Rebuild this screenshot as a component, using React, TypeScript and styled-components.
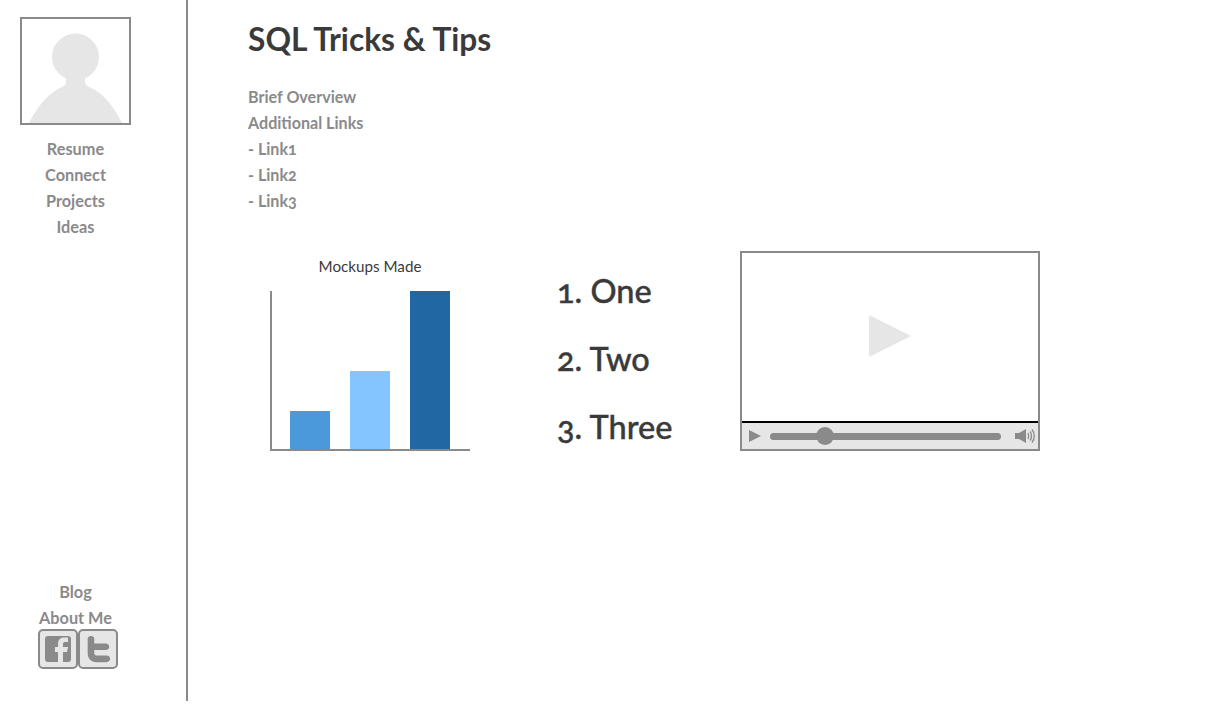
import React from "react";
import styled, { createGlobalStyle } from "styled-components";

const Global = createGlobalStyle`
  html, body { margin: 0; padding: 0; background: #fff; }
  body { font-family: Lato, "Open Sans", "Liberation Sans", sans-serif; }
`;

const Page = styled.div`
  display: flex;
  width: 1210px;
  height: 721px;
  overflow: hidden;
`;

const Sidebar = styled.aside`
  box-sizing: border-box;
  width: 188px;
  height: 701px;
  border-right: 2px solid #8a8a8a;
  padding: 17px 55px 0 20px;
  display: flex;
  flex-direction: column;
  align-items: center;
  flex: none;
`;

const Avatar = styled.div`
  box-sizing: border-box;
  flex: none;
  width: 111px;
  height: 108px;
  border: 2px solid #8a8a8a;
  margin-bottom: 11px;
  svg { display: block; }
`;

const NavLink = styled.div`
  height: 26px;
  line-height: 26px;
  font-size: 16.3px;
  font-weight: 700;
  color: #8a8a8a;
  text-align: center;
  white-space: nowrap;
`;

const Spacer = styled.div`
  flex: 1;
`;

const Socials = styled.div`
  display: flex;
  height: 40px;
  margin-top: -2px;
  margin-bottom: 32px;
  margin-left: 4px;
`;

const SocialButton = styled.div`
  box-sizing: border-box;
  width: 40px;
  height: 40px;
  border: 2px solid #8a8a8a;
  border-radius: 5px;
  background: #e6e6e6;
  display: flex;
  align-items: center;
  justify-content: center;
`;

const Main = styled.main`
  padding: 17px 0 0 60px;
  flex: 1;
`;

const Title = styled.h1`
  margin: 0 0 23px;
  height: 44px;
  line-height: 44px;
  font-size: 31.7px;
  font-weight: 700;
  color: #3a3a3a;
  white-space: nowrap;
`;

const InfoLine = styled.div`
  height: 26px;
  line-height: 26px;
  font-size: 16.1px;
  font-weight: 700;
  color: #8a8a8a;
  font-feature-settings: "onum";
`;

const Row = styled.div`
  display: flex;
  align-items: flex-start;
  margin-top: 37px;
`;

const Chart = styled.div`
  width: 244px;
  padding-left: 22px;
  flex: none;
`;

const ChartTitle = styled.div`
  width: 200px;
  height: 30px;
  line-height: 30px;
  margin-bottom: 10px;
  font-size: 15.2px;
  color: #3a3a3a;
  text-align: center;
`;

const Plot = styled.div`
  box-sizing: border-box;
  width: 200px;
  height: 160px;
  border-left: 2px solid #8a8a8a;
  border-bottom: 2px solid #8a8a8a;
  padding-left: 18px;
  display: flex;
  align-items: flex-end;
  gap: 20px;
`;

const Bar = styled.div<{ $h: number; $c: string }>`
  width: 40px;
  height: ${(p) => p.$h}px;
  background: ${(p) => p.$c};
`;

const Numbers = styled.div`
  width: 183px;
  margin-left: 43px;
  padding-top: 17px;
  flex: none;
`;

const NumberItem = styled.div`
  height: 68px;
  line-height: 46px;
  font-size: 32.5px;
  font-weight: 500;
  color: #3a3a3a;
  font-feature-settings: "onum";
  -webkit-text-stroke: 0.4px #3a3a3a;
  white-space: nowrap;
`;

const Video = styled.div`
  box-sizing: border-box;
  width: 300px;
  height: 200px;
  border: 2px solid #8a8a8a;
  display: flex;
  flex-direction: column;
  flex: none;
`;

const Screen = styled.div`
  flex: 1;
  display: flex;
  align-items: center;
  justify-content: center;
  padding-bottom: 2px;
`;

const Controls = styled.div`
  box-sizing: border-box;
  height: 28px;
  background: #e6e6e6;
  border-top: 2px solid #000;
  display: flex;
  align-items: center;
  padding: 0 2px 0 7px;
`;

const Track = styled.div`
  position: relative;
  width: 231px;
  height: 7px;
  margin-left: 9px;
  border-radius: 4px;
  background: #8a8a8a;
`;

const Knob = styled.div`
  position: absolute;
  left: 46px;
  top: -5.5px;
  width: 18px;
  height: 18px;
  border-radius: 50%;
  background: #8a8a8a;
`;

const VolumeIcon = styled.svg`
  margin-left: auto;
  display: block;
`;

export default function App() {
  return (
    <Page>
      <Global />
      <Sidebar>
        <Avatar>
          <svg width="107" height="104" viewBox="0 0 107 104">
            <circle cx="53.5" cy="38" r="23.5" fill="#e6e6e6" />
            <path
              fill="#e6e6e6"
              d="M7 104 C16 86 28 73 40 68 C43 67 44 65 44 62 V52 H63 V62 C63 65 64 67 67 68 C80 73 91 86 100 104 Z"
            />
          </svg>
        </Avatar>
        <NavLink>Resume</NavLink>
        <NavLink>Connect</NavLink>
        <NavLink>Projects</NavLink>
        <NavLink>Ideas</NavLink>
        <Spacer />
        <NavLink>Blog</NavLink>
        <NavLink>About Me</NavLink>
        <Socials>
          <SocialButton>
            <svg width="30" height="30" viewBox="0 0 30 30">
              <path
                fill="#8a8a8a"
                d="M5 2 H25 C27 2 28 3 28 5 V25 C28 27 27 28 25 28 H20 V18 H24 L25 13 H20 V10 C20 8.5 21 8 22 8 H25 V3.5 H21 C17 3.5 15 6 15 10 V13 H12 V18 H15 V28 H5 C3 28 2 27 2 25 V5 C2 3 3 2 5 2 Z"
              />
            </svg>
          </SocialButton>
          <SocialButton>
            <svg width="30" height="30" viewBox="0 0 32 32">
              <path
                fill="#8a8a8a"
                d="M5 5 C5 3 6.5 2 8.5 2 C10.5 2 12 3 12 5 V10 H24 C26.5 10 28 11.5 28 13.5 C28 15.5 26.5 17 24 17 H12 V20 C12 22 13 23 15 23 H25 C27.5 23 29 24.5 29 26.5 C29 28.5 27.5 30 25 30 H14 C9 30 5 26 5 21 Z"
              />
            </svg>
          </SocialButton>
        </Socials>
      </Sidebar>
      <Main>
        <Title>SQL Tricks &amp; Tips</Title>
        <InfoLine>Brief Overview</InfoLine>
        <InfoLine>Additional Links</InfoLine>
        <InfoLine>- Link1</InfoLine>
        <InfoLine>- Link2</InfoLine>
        <InfoLine>- Link3</InfoLine>
        <Row>
          <Chart>
            <ChartTitle>Mockups Made</ChartTitle>
            <Plot>
              <Bar $h={38} $c="#4b98da" />
              <Bar $h={78} $c="#85c5ff" />
              <Bar $h={158} $c="#2067a3" />
            </Plot>
          </Chart>
          <Numbers>
            <NumberItem>1. One</NumberItem>
            <NumberItem>2. Two</NumberItem>
            <NumberItem>3. Three</NumberItem>
          </Numbers>
          <Video>
            <Screen>
              <svg width="44" height="44" viewBox="0 0 44 44">
                <path fill="#e6e6e6" d="M1 1 L43 22 L1 43 Z" />
              </svg>
            </Screen>
            <Controls>
              <svg width="12" height="12" viewBox="0 0 12 12">
                <path fill="#8a8a8a" d="M0 0 L12 6 L0 12 Z" />
              </svg>
              <Track>
                <Knob />
              </Track>
              <VolumeIcon width="21" height="16" viewBox="0 0 21 16">
                <path fill="#8a8a8a" d="M0 5 H4 L11 1 V15 L4 11 H0 Z" />
                <path
                  fill="none"
                  stroke="#8a8a8a"
                  strokeWidth="1.3"
                  d="M13 5 C14 7 14 9 13 11 M15 3.5 C17 6 17 10 15 12.5 M17 1.5 C20 5 20 11 17 14.5"
                />
              </VolumeIcon>
            </Controls>
          </Video>
        </Row>
      </Main>
    </Page>
  );
}
